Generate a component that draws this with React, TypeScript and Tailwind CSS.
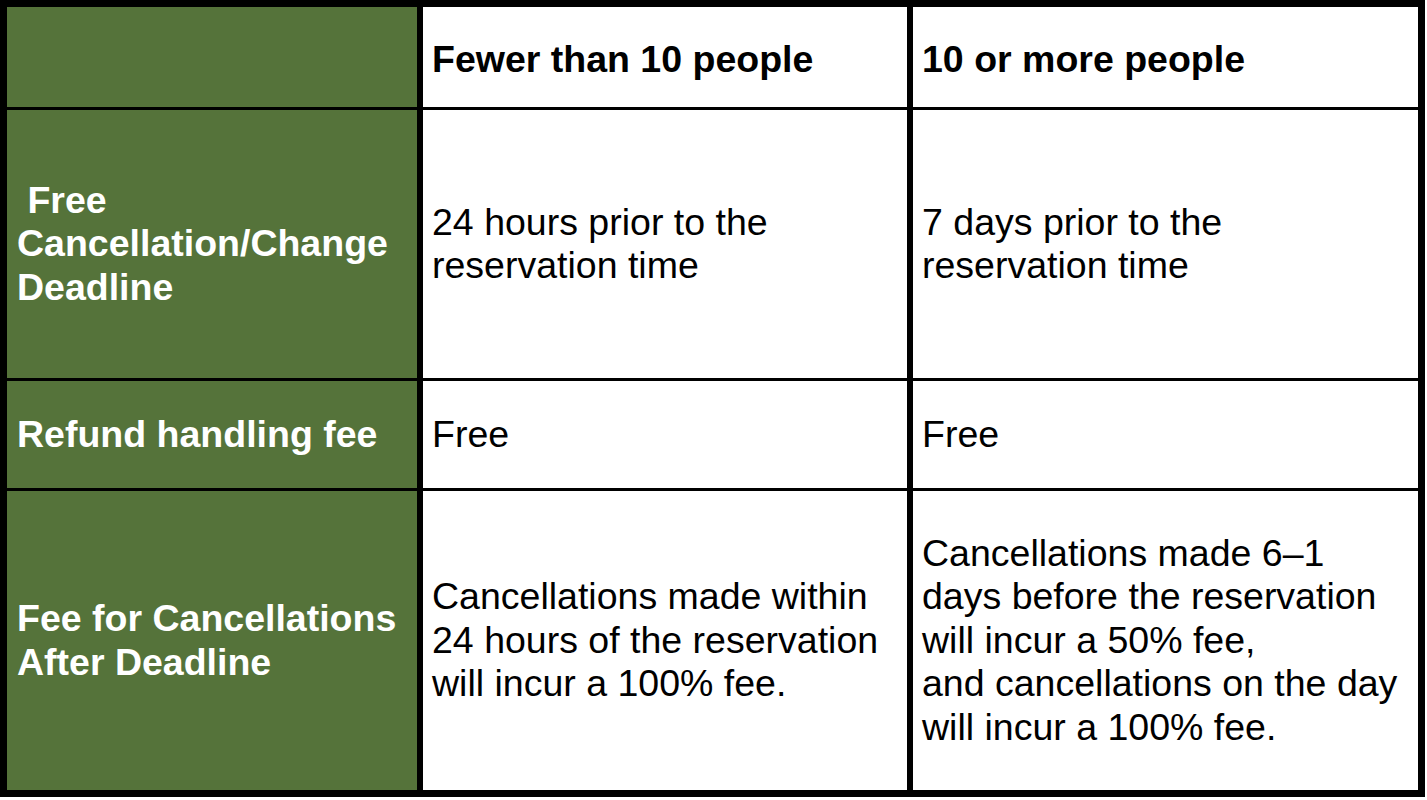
import React from 'react';

const font = { fontFamily: '"Liberation Sans", Arial, sans-serif' };

const HeadCell = ({ children }: { children: React.ReactNode }) => (
    <div className="flex items-center bg-[#55733a] px-[10px] text-[37.5px] font-bold leading-[43.5px] text-white">
        <div>{children}</div>
    </div>
);

const Cell = ({ children, bold = false }: { children: React.ReactNode; bold?: boolean }) => (
    <div
        className={`flex items-center bg-white px-[9px] text-[37.5px] leading-[43.5px] text-black ${
            bold ? 'font-bold pt-[5px]' : 'font-normal'
        }`}
    >
        <div>{children}</div>
    </div>
);

const App = () => {
    return (
        <div className="min-h-[800px] w-[1427px] bg-white" style={font}>
            <div className="grid w-[1425px] grid-cols-[410px_484px_505px] grid-rows-[100px_268px_107px_299px] gap-x-[6px] gap-y-[3px] border-[7px] border-black bg-black">
                <div className="bg-[#55733a]"></div>
                <Cell bold>Fewer than 10 people</Cell>
                <Cell bold>10 or more people</Cell>

                <HeadCell>
                    {'\u00a0'}Free
                    <br />
                    Cancellation/Change
                    <br />
                    Deadline
                </HeadCell>
                <Cell>
                    24 hours prior to the
                    <br />
                    reservation time
                </Cell>
                <Cell>
                    7 days prior to the
                    <br />
                    reservation time
                </Cell>

                <HeadCell>Refund handling fee</HeadCell>
                <Cell>Free</Cell>
                <Cell>Free</Cell>

                <HeadCell>
                    Fee for Cancellations
                    <br />
                    After Deadline
                </HeadCell>
                <Cell>
                    Cancellations made within
                    <br />
                    24 hours of the reservation
                    <br />
                    will incur a 100% fee.
                </Cell>
                <Cell>
                    Cancellations made 6–1
                    <br />
                    days before the reservation
                    <br />
                    will incur a 50% fee,
                    <br />
                    and cancellations on the day
                    <br />
                    will incur a 100% fee.
                </Cell>
            </div>
        </div>
    );
};

export default App;
